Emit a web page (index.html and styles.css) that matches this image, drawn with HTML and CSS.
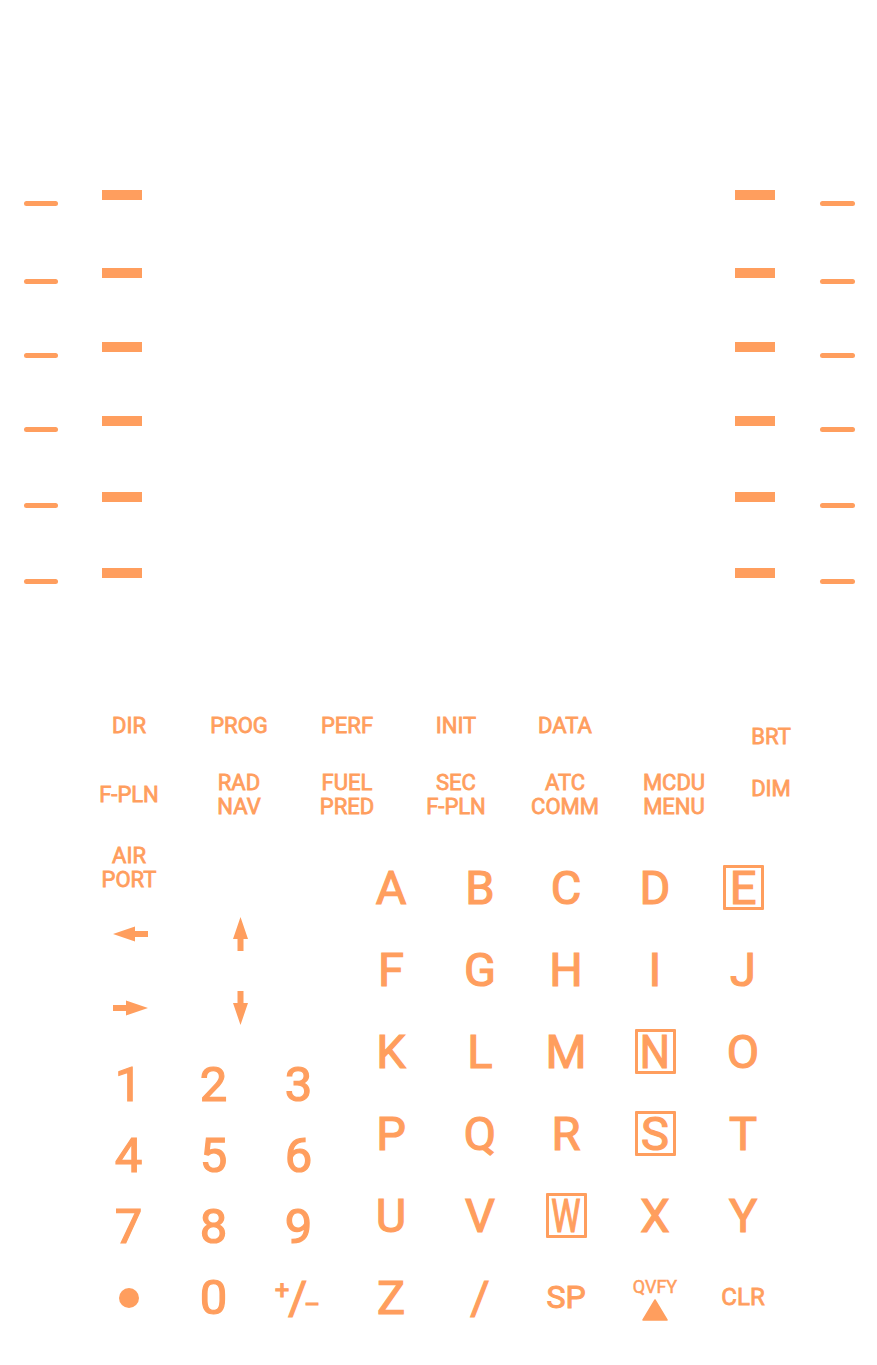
FILE: index.html
```html
<!DOCTYPE html>
<html lang="en">
<head>
<meta charset="utf-8">
<title>MCDU keyboard</title>
<link rel="stylesheet" href="styles.css">
</head>
<body>
<main class="panel">
  <section class="lsk">
    <div class="lsk-side left">
      <div class="lsk-row"><span class="dash-thin"></span><span class="dash-thick"></span></div>
      <div class="lsk-row"><span class="dash-thin"></span><span class="dash-thick"></span></div>
      <div class="lsk-row"><span class="dash-thin"></span><span class="dash-thick"></span></div>
      <div class="lsk-row"><span class="dash-thin"></span><span class="dash-thick"></span></div>
      <div class="lsk-row"><span class="dash-thin"></span><span class="dash-thick"></span></div>
      <div class="lsk-row"><span class="dash-thin"></span><span class="dash-thick"></span></div>
    </div>
    <div class="lsk-side right">
      <div class="lsk-row"><span class="dash-thick"></span><span class="dash-thin"></span></div>
      <div class="lsk-row"><span class="dash-thick"></span><span class="dash-thin"></span></div>
      <div class="lsk-row"><span class="dash-thick"></span><span class="dash-thin"></span></div>
      <div class="lsk-row"><span class="dash-thick"></span><span class="dash-thin"></span></div>
      <div class="lsk-row"><span class="dash-thick"></span><span class="dash-thin"></span></div>
      <div class="lsk-row"><span class="dash-thick"></span><span class="dash-thin"></span></div>
    </div>
  </section>

  <section class="fkeys">
    <div class="fkey">DIR</div>
    <div class="fkey">PROG</div>
    <div class="fkey">PERF</div>
    <div class="fkey">INIT</div>
    <div class="fkey">DATA</div>
    <div class="fkey"></div>
    <div class="fkey fkey-brt">BRT</div>
    <div class="fkey">F-PLN</div>
    <div class="fkey">RAD<br>NAV</div>
    <div class="fkey">FUEL<br>PRED</div>
    <div class="fkey">SEC<br>F-PLN</div>
    <div class="fkey">ATC<br>COMM</div>
    <div class="fkey">MCDU<br>MENU</div>
    <div class="fkey fkey-dim">DIM</div>
  </section>

  <section class="lower">
    <div class="leftpad">
      <div class="airport">AIR<br>PORT</div>
      <div class="arrows">
        <div class="arrow">
          <svg width="35" height="16" viewBox="0 0 35 16"><polygon points="0,8 22,0.5 22,5 35,5 35,11 22,11 22,15.5" fill="#ff9e5e"/></svg>
        </div>
        <div class="arrow">
          <svg width="15" height="34" viewBox="0 0 15 34"><polygon points="7.5,0 15,22 10.5,22 10.5,34 4.5,34 4.5,22 0,22" fill="#ff9e5e"/></svg>
        </div>
        <div class="arrow">
          <svg width="35" height="16" viewBox="0 0 35 16"><polygon points="35,8 13,0.5 13,5 0,5 0,11 13,11 13,15.5" fill="#ff9e5e"/></svg>
        </div>
        <div class="arrow">
          <svg width="15" height="34" viewBox="0 0 15 34"><polygon points="7.5,34 15,12 10.5,12 10.5,0 4.5,0 4.5,12 0,12" fill="#ff9e5e"/></svg>
        </div>
      </div>
      <div class="numpad">
        <div class="key num">1</div>
        <div class="key num">2</div>
        <div class="key num">3</div>
        <div class="key num">4</div>
        <div class="key num">5</div>
        <div class="key num">6</div>
        <div class="key num">7</div>
        <div class="key num">8</div>
        <div class="key num">9</div>
        <div class="key"><span class="dot"></span></div>
        <div class="key num">0</div>
        <div class="key"><span class="pm"><span class="pm-plus">+</span><span class="pm-slash">/</span><span class="pm-minus">–</span></span></div>
      </div>
    </div>

    <div class="alpha">
      <div class="key">A</div>
      <div class="key">B</div>
      <div class="key">C</div>
      <div class="key">D</div>
      <div class="key"><span class="boxed">E</span></div>
      <div class="key">F</div>
      <div class="key">G</div>
      <div class="key">H</div>
      <div class="key">I</div>
      <div class="key">J</div>
      <div class="key">K</div>
      <div class="key">L</div>
      <div class="key">M</div>
      <div class="key"><span class="boxed"><span class="narrow-n">N</span></span></div>
      <div class="key">O</div>
      <div class="key">P</div>
      <div class="key">Q</div>
      <div class="key">R</div>
      <div class="key"><span class="boxed">S</span></div>
      <div class="key">T</div>
      <div class="key">U</div>
      <div class="key">V</div>
      <div class="key"><span class="boxed"><span class="narrow">W</span></span></div>
      <div class="key">X</div>
      <div class="key">Y</div>
      <div class="key">Z</div>
      <div class="key">/</div>
      <div class="key key-sp">SP</div>
      <div class="key key-ovfy">
        <span class="ovfy-label">QVFY</span>
        <svg width="26" height="22" viewBox="0 0 26 22"><polygon points="13,1 25,21 1,21" fill="#ff9e5e" stroke="#ff9e5e" stroke-width="1.5" stroke-linejoin="round"/></svg>
      </div>
      <div class="key key-clr">CLR</div>
    </div>
  </section>
</main>
</body>
</html>
```

FILE: styles.css
```css
* {
  box-sizing: border-box;
}

html,
body {
  margin: 0;
  padding: 0;
  background: #ffffff;
}

body {
  width: 877px;
  height: 1365px;
  overflow: hidden;
  font-family: Roboto, "DejaVu Sans", sans-serif;
  font-weight: 400;
  color: #ff9e5e;
}

/* line select keys */
.lsk {
  display: flex;
  justify-content: space-between;
  padding: 190px 22px 0 24px;
}

.lsk-side {
  display: grid;
  grid-template-rows: 78px 74px 74px 76px 76px 16px;
}

.lsk-row {
  display: flex;
  align-items: flex-start;
  gap: 44px;
}

.lsk-side.right .lsk-row {
  gap: 45px;
}

.dash-thin {
  display: block;
  width: 34px;
  height: 5px;
  margin-top: 11px;
  border-radius: 3px;
  background: #ff9e5e;
}

.lsk-side.right .dash-thin {
  width: 35px;
}

.dash-thick {
  display: block;
  width: 40px;
  height: 10px;
  background: #ff9e5e;
}

/* function keys */
.fkeys {
  display: grid;
  grid-template-columns: 110px 110px 106px 112px 106px 112px 82px;
  grid-template-rows: 40px 48px;
  row-gap: 25px;
  margin: 122px 0 0 74px;
}

.fkey {
  display: flex;
  align-items: center;
  justify-content: center;
  text-align: center;
  font-size: 22px;
  line-height: 24px;
  -webkit-text-stroke: 0.8px #ff9e5e;
}

.fkey-brt {
  padding-top: 22px;
}

.fkey-dim {
  padding-bottom: 12px;
}

/* lower keyboard */
.lower {
  display: flex;
  margin-top: 25px;
}

.leftpad {
  width: 347px;
  flex: none;
}

.airport {
  width: 110px;
  margin-left: 74px;
  text-align: center;
  font-size: 22px;
  line-height: 24px;
  -webkit-text-stroke: 0.8px #ff9e5e;
}

.arrows {
  display: grid;
  grid-template-columns: 112px 108px;
  grid-template-rows: 74px 74px;
  margin: 5px 0 0 74px;
}

.arrow {
  display: flex;
  align-items: center;
  justify-content: center;
}

.numpad {
  display: grid;
  grid-template-columns: repeat(3, 85px);
  grid-template-rows: repeat(4, 71px);
  margin: 4px 0 0 86px;
}

.key {
  display: flex;
  align-items: center;
  justify-content: center;
  font-size: 47px;
  line-height: 1;
  -webkit-text-stroke: 1.2px #ff9e5e;
}

.key.num {
  font-size: 49px;
}

.dot {
  display: block;
  width: 20px;
  height: 20px;
  border-radius: 50%;
  background: #ff9e5e;
}

.pm {
  display: inline-block;
  white-space: nowrap;
  font-size: 46px;
  line-height: 1;
  margin-left: -2px;
}

.pm-plus {
  font-size: 25px;
  vertical-align: 15px;
  margin-right: -1px;
}

.pm-slash {
  display: inline-block;
}

.pm-minus {
  font-size: 24px;
  vertical-align: 1px;
  margin-left: -3px;
}

.alpha {
  display: grid;
  grid-template-columns: 88px 90px 82px 96px 80px;
  grid-template-rows: 86px 78px 86px 78px 86px 78px;
}

.boxed {
  display: flex;
  align-items: center;
  justify-content: center;
  width: 41px;
  height: 45px;
  border: 3px solid #ff9e5e;
  border-radius: 1px;
}

.narrow {
  display: inline-block;
  transform: scaleX(0.7);
}

.narrow-n {
  display: inline-block;
  transform: scaleX(0.9);
}

.key-sp {
  font-size: 32px;
  -webkit-text-stroke: 1px #ff9e5e;
}

.key-ovfy {
  flex-direction: column;
  gap: 3px;
  padding-top: 4px;
}

.ovfy-label {
  font-size: 18px;
  line-height: 18px;
  -webkit-text-stroke: 0.5px #ff9e5e;
}

.key-clr {
  font-size: 24px;
  -webkit-text-stroke: 0.8px #ff9e5e;
}
```
